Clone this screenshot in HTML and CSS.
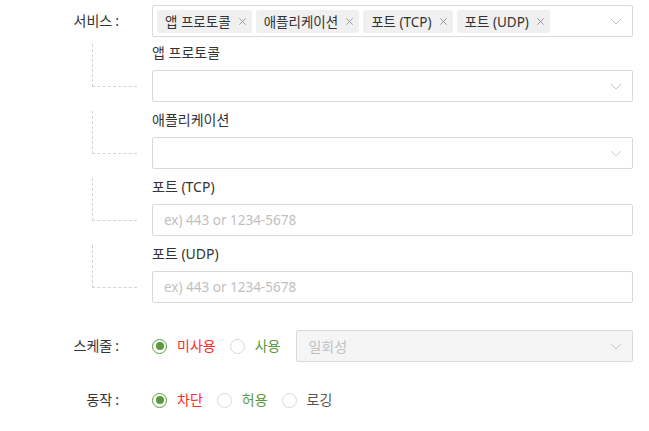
FILE: index.html
```html
<!DOCTYPE html>
<html lang="ko">
<head>
<meta charset="utf-8">
<link rel="stylesheet" href="styles.css">
</head>
<body>
<div class="form">
  <div class="row">
    <div class="label">서비스<span class="colon">:</span></div>
    <div class="select multi">
      <div class="tags">
        <span class="tag">앱 프로토콜<svg class="x" viewBox="0 0 10 10"><path d="M1.5 1.5l7 7M8.5 1.5l-7 7"/></svg></span>
        <span class="tag">애플리케이션<svg class="x" viewBox="0 0 10 10"><path d="M1.5 1.5l7 7M8.5 1.5l-7 7"/></svg></span>
        <span class="tag">포트 (TCP)<svg class="x" viewBox="0 0 10 10"><path d="M1.5 1.5l7 7M8.5 1.5l-7 7"/></svg></span>
        <span class="tag">포트 (UDP)<svg class="x" viewBox="0 0 10 10"><path d="M1.5 1.5l7 7M8.5 1.5l-7 7"/></svg></span>
      </div>
      <svg class="chev" viewBox="0 0 12 7"><path d="M1 1l5 5 5-5"/></svg>
    </div>
  </div>

  <div class="subs">
    <div class="sub">
      <div class="conn"></div>
      <div class="sub-label">앱 프로토콜</div>
      <div class="select"><svg class="chev" viewBox="0 0 12 7"><path d="M1 1l5 5 5-5"/></svg></div>
    </div>
    <div class="sub">
      <div class="conn"></div>
      <div class="sub-label">애플리케이션</div>
      <div class="select"><svg class="chev" viewBox="0 0 12 7"><path d="M1 1l5 5 5-5"/></svg></div>
    </div>
    <div class="sub">
      <div class="conn"></div>
      <div class="sub-label">포트 (TCP)</div>
      <input class="input" type="text" placeholder="ex) 443 or 1234-5678">
    </div>
    <div class="sub">
      <div class="conn"></div>
      <div class="sub-label">포트 (UDP)</div>
      <input class="input" type="text" placeholder="ex) 443 or 1234-5678">
    </div>
  </div>

  <div class="row sched">
    <div class="label">스케줄<span class="colon">:</span></div>
    <div class="radios">
      <label class="radio"><span class="dot checked"></span><span class="rtext red">미사용</span></label>
      <label class="radio"><span class="dot"></span><span class="rtext green">사용</span></label>
      <div class="select disabled"><span class="ph">일회성</span><svg class="chev" viewBox="0 0 12 7"><path d="M1 1l5 5 5-5"/></svg></div>
    </div>
  </div>

  <div class="row action">
    <div class="label">동작<span class="colon">:</span></div>
    <div class="radios">
      <label class="radio"><span class="dot checked"></span><span class="rtext red">차단</span></label>
      <label class="radio"><span class="dot"></span><span class="rtext green">허용</span></label>
      <label class="radio"><span class="dot"></span><span class="rtext gray">로깅</span></label>
    </div>
  </div>
</div>
</body>
</html>
```
FILE: styles.css
```css
* { box-sizing: border-box; }

body {
  margin: 0;
  background: #fff;
  color: #333;
  font-family: "Noto Sans", "Noto Sans CJK KR", sans-serif;
  font-size: 14px;
}

.form { padding-top: 5px; }

.row {
  display: grid;
  grid-template-columns: 152px 481px;
  align-items: center;
}

.label {
  padding-right: 33px;
  text-align: right;
  line-height: 32px;
  color: #333;
}

.colon { margin-left: 3px; }

.select {
  height: 32px;
  border: 1px solid #d9d9d9;
  border-radius: 2px;
  background: #fff;
  display: flex;
  align-items: center;
  padding: 0 10px 0 4px;
}

.tags {
  display: flex;
  align-items: center;
  gap: 4px;
}

.tag {
  height: 23px;
  display: flex;
  align-items: center;
  padding: 0 5px 0 8px;
  background: #f0f0f0;
  border-radius: 3px;
  font-size: 13.5px;
  color: #333;
  white-space: nowrap;
}

.x {
  width: 9px;
  height: 9px;
  margin-left: 7px;
}

.x path {
  stroke: #999;
  stroke-width: 1.1;
  fill: none;
}

.chev {
  width: 12px;
  height: 7px;
  margin-left: auto;
}

.chev path {
  fill: none;
  stroke: #c4c4c4;
  stroke-width: 1;
}

.subs {
  margin-top: 5px;
  display: flex;
  flex-direction: column;
  gap: 7px;
}

.sub {
  display: grid;
  grid-template-columns: 152px 481px;
  grid-template-rows: 28px 32px;
}

.conn {
  grid-column: 1;
  grid-row: 1 / 3;
  margin: 2px 0 0 92px;
  width: 45px;
  height: 43px;
  border-left: 1px dashed #d3d3d3;
  border-bottom: 1px dashed #d3d3d3;
}

.sub-label {
  grid-column: 2;
  grid-row: 1;
  line-height: 22px;
  color: #333;
}

.sub .select,
.sub .input {
  grid-column: 2;
  grid-row: 2;
}

.input {
  height: 32px;
  width: 100%;
  border: 1px solid #d9d9d9;
  border-radius: 2px;
  padding: 0 11px;
  font-family: "Noto Sans", "Noto Sans CJK KR", sans-serif;
  font-size: 13.5px;
  color: #333;
  outline: none;
  background: #fff;
}

.input::placeholder { color: #bfbfbf; }

.sched { margin-top: 27px; }
.action { margin-top: 22px; }

.radios {
  display: flex;
  align-items: center;
  height: 32px;
}

.radio {
  display: flex;
  align-items: center;
  margin-right: 14px;
}

.dot {
  width: 15px;
  height: 15px;
  border: 1px solid #d9d9d9;
  border-radius: 50%;
  background: #fff;
  display: flex;
  align-items: center;
  justify-content: center;
}

.dot.checked { border-color: #5a9a3c; }

.dot.checked::after {
  content: "";
  width: 8px;
  height: 8px;
  border-radius: 50%;
  background: #5a9a3c;
}

.rtext { margin-left: 10px; line-height: 22px; }

.red { color: #ff2a2a; }
.green { color: #5a9a3c; }
.gray { color: #555; }

.select.disabled {
  flex: 1;
  margin-left: 2px;
  background: #f5f5f5;
  padding-left: 11px;
}

.ph { color: #bfbfbf; }
```
